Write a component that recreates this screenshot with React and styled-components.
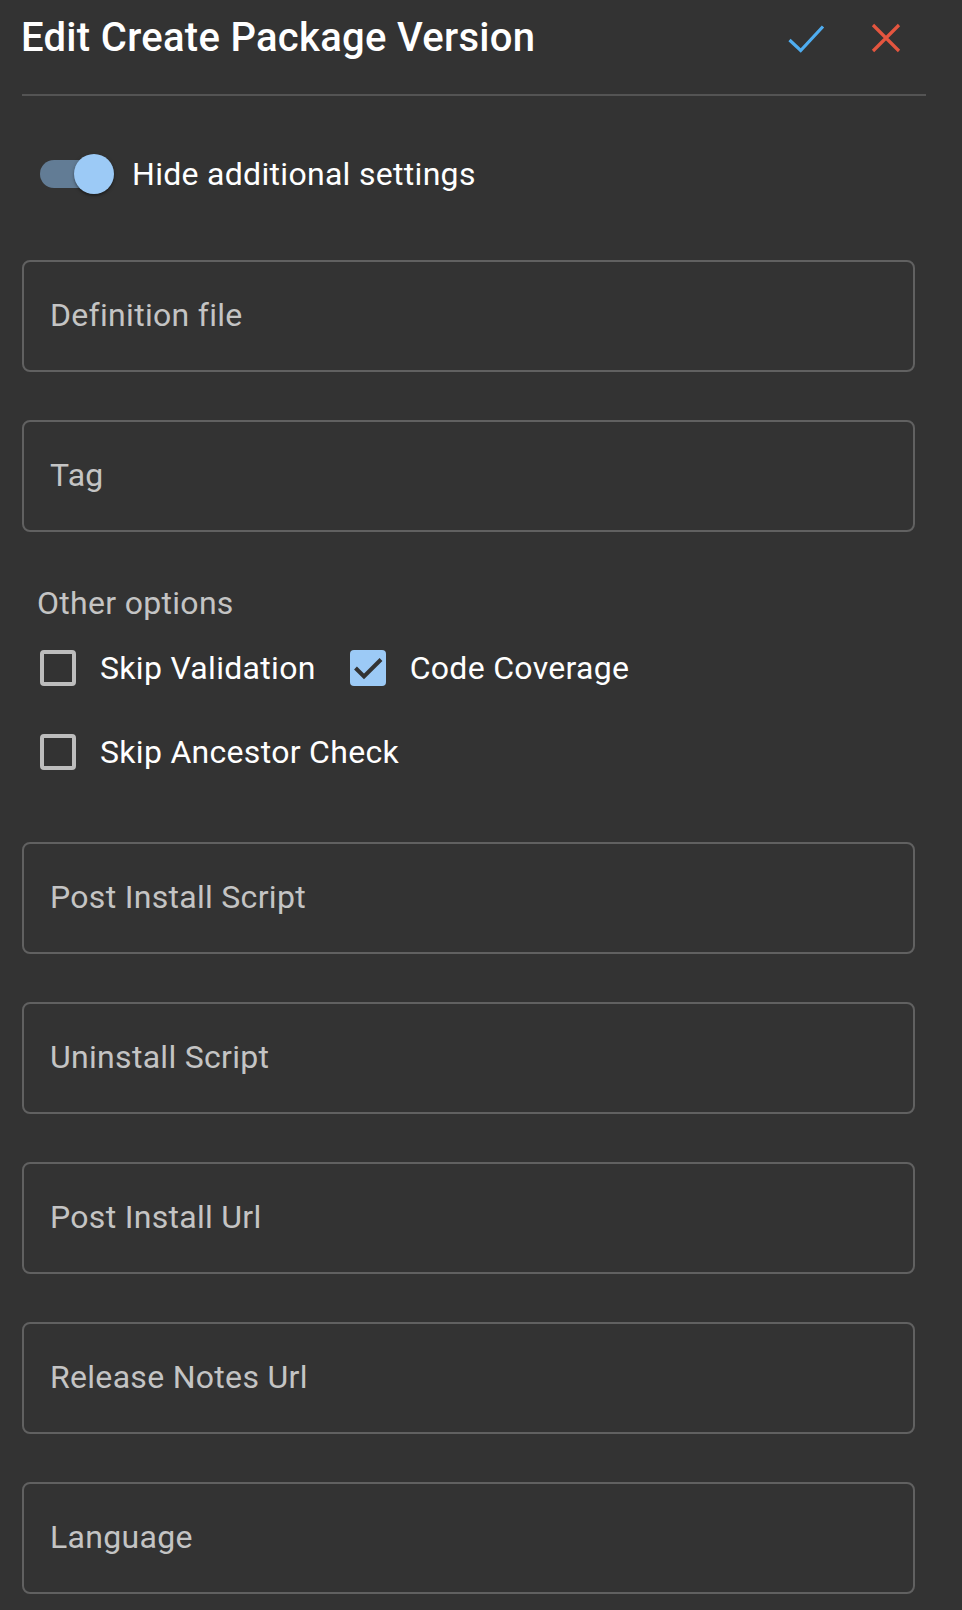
import styled, { createGlobalStyle } from "styled-components";

const GlobalStyle = createGlobalStyle`
  body {
    margin: 0;
    background: #333333;
    font-family: Roboto, "Liberation Sans", sans-serif;
    color: #ffffff;
  }
`;

const fields = ["Definition file", "Tag"];
const moreFields = [
  "Post Install Script",
  "Uninstall Script",
  "Post Install Url",
  "Release Notes Url",
  "Language",
];

const CheckIcon = () => (
  <svg width="48" height="48" viewBox="0 0 48 48" fill="none">
    <polyline
      points="7.5,26 18.7,36.5 41,12.5"
      stroke="#4fadf0"
      strokeWidth="3.2"
      strokeLinejoin="miter"
    />
  </svg>
);

const CloseIcon = () => (
  <svg width="48" height="48" viewBox="0 0 48 48" fill="none">
    <path d="M11 11 L37 37 M37 11 L11 37" stroke="#e4553f" strokeWidth="3.2" />
  </svg>
);

const Box = ({ checked }) => (
  <CheckBox checked={checked}>
    {checked && (
      <svg width="36" height="36" viewBox="0 0 36 36" fill="none">
        <polyline
          points="5.5,18 14,26.5 31,9.5"
          stroke="#333333"
          strokeWidth="4"
        />
      </svg>
    )}
  </CheckBox>
);

const App = () => {
  return (
    <Page>
      <GlobalStyle />
      <Header>
        <Title>Edit Create Package Version</Title>
        <Actions>
          <IconButton>
            <CheckIcon />
          </IconButton>
          <IconButton>
            <CloseIcon />
          </IconButton>
        </Actions>
      </Header>
      <Divider />

      <SwitchRow>
        <Switch>
          <Track />
          <Thumb />
        </Switch>
        <SwitchLabel>Hide additional settings</SwitchLabel>
      </SwitchRow>

      {fields.map((f) => (
        <Field key={f}>
          <FieldLabel>{f}</FieldLabel>
        </Field>
      ))}

      <GroupLabel>Other options</GroupLabel>
      <OptionRow>
        <Option>
          <Box />
          <OptionText>Skip Validation</OptionText>
        </Option>
        <Option>
          <Box checked />
          <OptionText>Code Coverage</OptionText>
        </Option>
      </OptionRow>
      <OptionRow>
        <Option>
          <Box />
          <OptionText>Skip Ancestor Check</OptionText>
        </Option>
      </OptionRow>

      {moreFields.map((f) => (
        <Field key={f}>
          <FieldLabel>{f}</FieldLabel>
        </Field>
      ))}
    </Page>
  );
};

export default App;

const Page = styled.div`
  padding: 6px 0 16px 22px;
  width: 904px;
`;

const Header = styled.div`
  display: flex;
  align-items: center;
  justify-content: space-between;
  height: 64px;
`;

const Title = styled.h1`
  margin: 0 0 0 -1px;
  font-size: 40px;
  font-weight: 500;
  line-height: 64px;
  letter-spacing: 0.3px;
  color: #ffffff;
`;

const Actions = styled.div`
  display: flex;
  gap: 32px;
  padding-right: 16px;
`;

const IconButton = styled.div`
  width: 48px;
  height: 48px;
  display: flex;
`;

const Divider = styled.div`
  margin-top: 24px;
  height: 2px;
  background: #545454;
`;

const SwitchRow = styled.div`
  display: flex;
  align-items: center;
  height: 76px;
  margin: 40px 0 0 18px;
`;

const Switch = styled.div`
  position: relative;
  width: 74px;
  height: 40px;
  margin-right: 18px;
`;

const Track = styled.div`
  position: absolute;
  left: 0;
  top: 6px;
  width: 68px;
  height: 28px;
  border-radius: 14px;
  background: #627c95;
`;

const Thumb = styled.div`
  position: absolute;
  left: 34px;
  top: 0;
  width: 40px;
  height: 40px;
  border-radius: 50%;
  background: #9ccaf6;
  box-shadow: 0 2px 2px rgba(0, 0, 0, 0.25), 0 1px 4px rgba(0, 0, 0, 0.2);
`;

const SwitchLabel = styled.span`
  font-size: 32px;
  letter-spacing: 0.3px;
`;

const Field = styled.div`
  box-sizing: border-box;
  width: 893px;
  height: 112px;
  margin-top: 48px;
  padding: 30px 26px 0;
  border: 2px solid #616161;
  border-radius: 8px;

  & + & {
    margin-top: 48px;
  }
`;

const FieldLabel = styled.div`
  font-size: 32px;
  line-height: 46px;
  color: #c4c4c4;
  letter-spacing: 0.3px;
`;

const GroupLabel = styled.div`
  margin: 48px 0 0 15px;
  font-size: 32px;
  line-height: 46px;
  color: #c4c4c4;
  letter-spacing: 0.3px;
`;

const OptionRow = styled.div`
  display: flex;
  align-items: center;
  height: 84px;
  padding-left: 18px;
`;

const Option = styled.div`
  display: flex;
  align-items: center;
  margin-right: 34px;
`;

const CheckBox = styled.div`
  box-sizing: border-box;
  width: 36px;
  height: 36px;
  margin-right: 24px;
  border-radius: 4px;
  border: ${(p) => (p.checked ? "none" : "4px solid #bdbdbd")};
  background: ${(p) => (p.checked ? "#9ccaf6" : "transparent")};
  display: flex;
`;

const OptionText = styled.span`
  font-size: 32px;
  letter-spacing: 0.3px;
  color: #ffffff;
`;
